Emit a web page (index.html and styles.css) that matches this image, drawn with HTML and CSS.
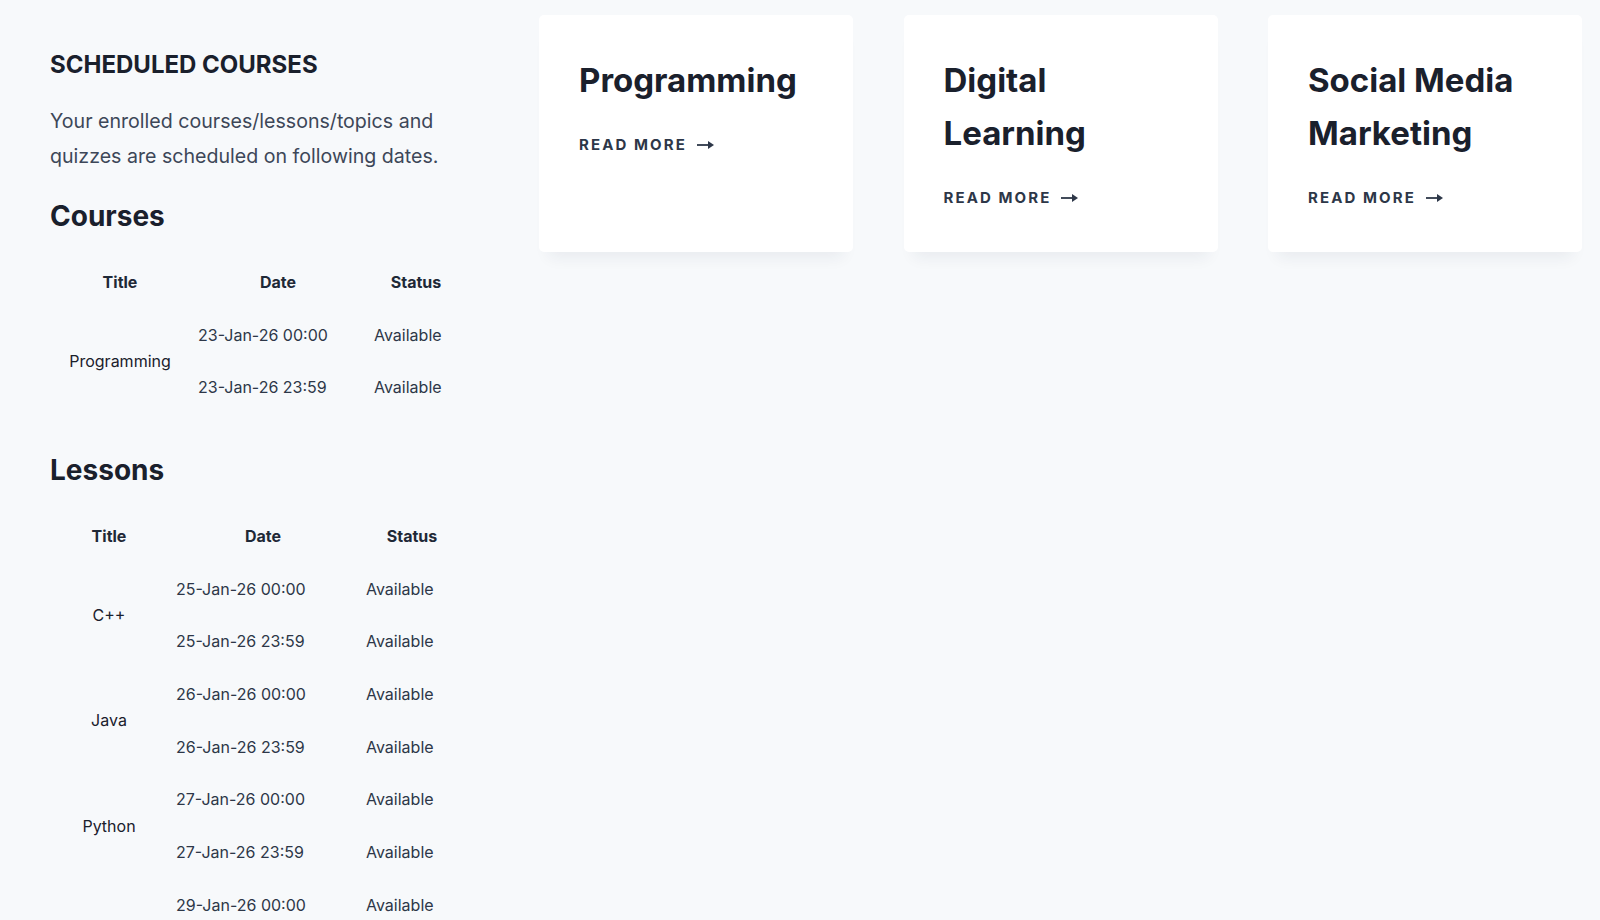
FILE: index.html
```html
<!DOCTYPE html>
<html lang="en">
<head>
<meta charset="utf-8">
<title>Scheduled Courses</title>
<link rel="stylesheet" href="styles.css">
</head>
<body>
<div class="page">
  <aside class="schedule">
    <h2 class="schedule-title">SCHEDULED COURSES</h2>
    <p class="schedule-intro">Your enrolled courses/lessons/topics and quizzes are scheduled on following dates.</p>

    <h3 class="schedule-heading">Courses</h3>
    <table class="schedule-table courses-table">
      <colgroup><col class="c-title"><col class="c-date"><col class="c-status"></colgroup>
      <thead>
        <tr><th>Title</th><th>Date</th><th>Status</th></tr>
      </thead>
      <tbody>
        <tr><td class="t-title" rowspan="2">Programming</td><td>23-Jan-26 00:00</td><td>Available</td></tr>
        <tr><td>23-Jan-26 23:59</td><td>Available</td></tr>
      </tbody>
    </table>

    <h3 class="schedule-heading lessons-heading">Lessons</h3>
    <table class="schedule-table lessons-table">
      <colgroup><col class="c-title"><col class="c-date"><col class="c-status"></colgroup>
      <thead>
        <tr><th>Title</th><th>Date</th><th>Status</th></tr>
      </thead>
      <tbody>
        <tr><td class="t-title" rowspan="2">C++</td><td>25-Jan-26 00:00</td><td>Available</td></tr>
        <tr><td>25-Jan-26 23:59</td><td>Available</td></tr>
        <tr><td class="t-title" rowspan="2">Java</td><td>26-Jan-26 00:00</td><td>Available</td></tr>
        <tr><td>26-Jan-26 23:59</td><td>Available</td></tr>
        <tr><td class="t-title" rowspan="2">Python</td><td>27-Jan-26 00:00</td><td>Available</td></tr>
        <tr><td>27-Jan-26 23:59</td><td>Available</td></tr>
        <tr><td class="t-title" rowspan="2">HTML</td><td>29-Jan-26 00:00</td><td>Available</td></tr>
        <tr><td>29-Jan-26 23:59</td><td>Available</td></tr>
      </tbody>
    </table>
  </aside>

  <main class="cards">
    <article class="card">
      <h2 class="card-title">Programming</h2>
      <a class="read-more" href="#">READ MORE
        <svg class="arrow" viewBox="0 0 17 8" width="17" height="8" aria-hidden="true"><path d="M0 3.1h12v1.8H0z" fill="currentColor"/><path d="M11 0l6 4-6 4z" fill="currentColor"/></svg>
      </a>
    </article>
    <article class="card">
      <h2 class="card-title">Digital Learning</h2>
      <a class="read-more" href="#">READ MORE
        <svg class="arrow" viewBox="0 0 17 8" width="17" height="8" aria-hidden="true"><path d="M0 3.1h12v1.8H0z" fill="currentColor"/><path d="M11 0l6 4-6 4z" fill="currentColor"/></svg>
      </a>
    </article>
    <article class="card">
      <h2 class="card-title">Social Media Marketing</h2>
      <a class="read-more" href="#">READ MORE
        <svg class="arrow" viewBox="0 0 17 8" width="17" height="8" aria-hidden="true"><path d="M0 3.1h12v1.8H0z" fill="currentColor"/><path d="M11 0l6 4-6 4z" fill="currentColor"/></svg>
      </a>
    </article>
  </main>
</div>
</body>
</html>
```
FILE: styles.css
```css
* { box-sizing: border-box; }

html, body {
  margin: 0;
  padding: 0;
  background: #f7f9fb;
  height: 920px;
  overflow: hidden;
}

body {
  font-family: Inter, "Liberation Sans", sans-serif;
  color: #2d3748;
}

.page {
  display: flex;
  align-items: flex-start;
  gap: 73px;
  padding: 15px 0 0 50px;
}

/* Left column */
.schedule {
  width: 416px;
  flex: none;
}

.schedule-title {
  margin: 32px 0 0;
  font-size: 24px;
  line-height: 36px;
  font-weight: 700;
  color: #1a202c;
}

.schedule-intro {
  margin: 21px 0 0;
  font-size: 19.6px;
  line-height: 34.5px;
  color: #3d4758;
}

.schedule-heading {
  margin: 22px 0 0;
  font-size: 28px;
  line-height: 42px;
  font-weight: 700;
  color: #1a202c;
}

.lessons-heading {
  margin-top: 35px;
}

.schedule-table {
  margin-top: 19px;
  width: 416px;
  table-layout: fixed;
  border-collapse: collapse;
  font-size: 16px;
  line-height: 24.67px;
}

.courses-table .c-title { width: 140px; }
.courses-table .c-date { width: 176px; }
.courses-table .c-status { width: 100px; }

.lessons-table .c-title { width: 118px; }
.lessons-table .c-date { width: 190px; }
.lessons-table .c-status { width: 108px; }

.schedule-table th {
  padding: 14px 8px;
  font-weight: 700;
  text-align: center;
  color: #1f2937;
}

.schedule-table td {
  padding: 14px 8px;
  text-align: left;
  color: #2d3748;
  white-space: nowrap;
}

.schedule-table td.t-title {
  text-align: center;
  vertical-align: middle;
  color: #1a202c;
}

/* Cards */
.cards {
  display: grid;
  grid-template-columns: repeat(3, 314px);
  column-gap: 50.5px;
}

.card {
  background: #ffffff;
  border-radius: 5px;
  padding: 39px 40px 42px;
  box-shadow: 0 15px 15px -10px rgba(26, 42, 64, 0.07);
}

.card-title {
  margin: 0;
  font-size: 33px;
  line-height: 53px;
  font-weight: 700;
  color: #1a202c;
}

.read-more {
  display: inline-flex;
  align-items: center;
  gap: 10px;
  margin-top: 26px;
  font-size: 15px;
  line-height: 24px;
  font-weight: 700;
  letter-spacing: 0.14em;
  color: #2d3748;
  text-decoration: none;
}

.arrow {
  display: block;
}
```
